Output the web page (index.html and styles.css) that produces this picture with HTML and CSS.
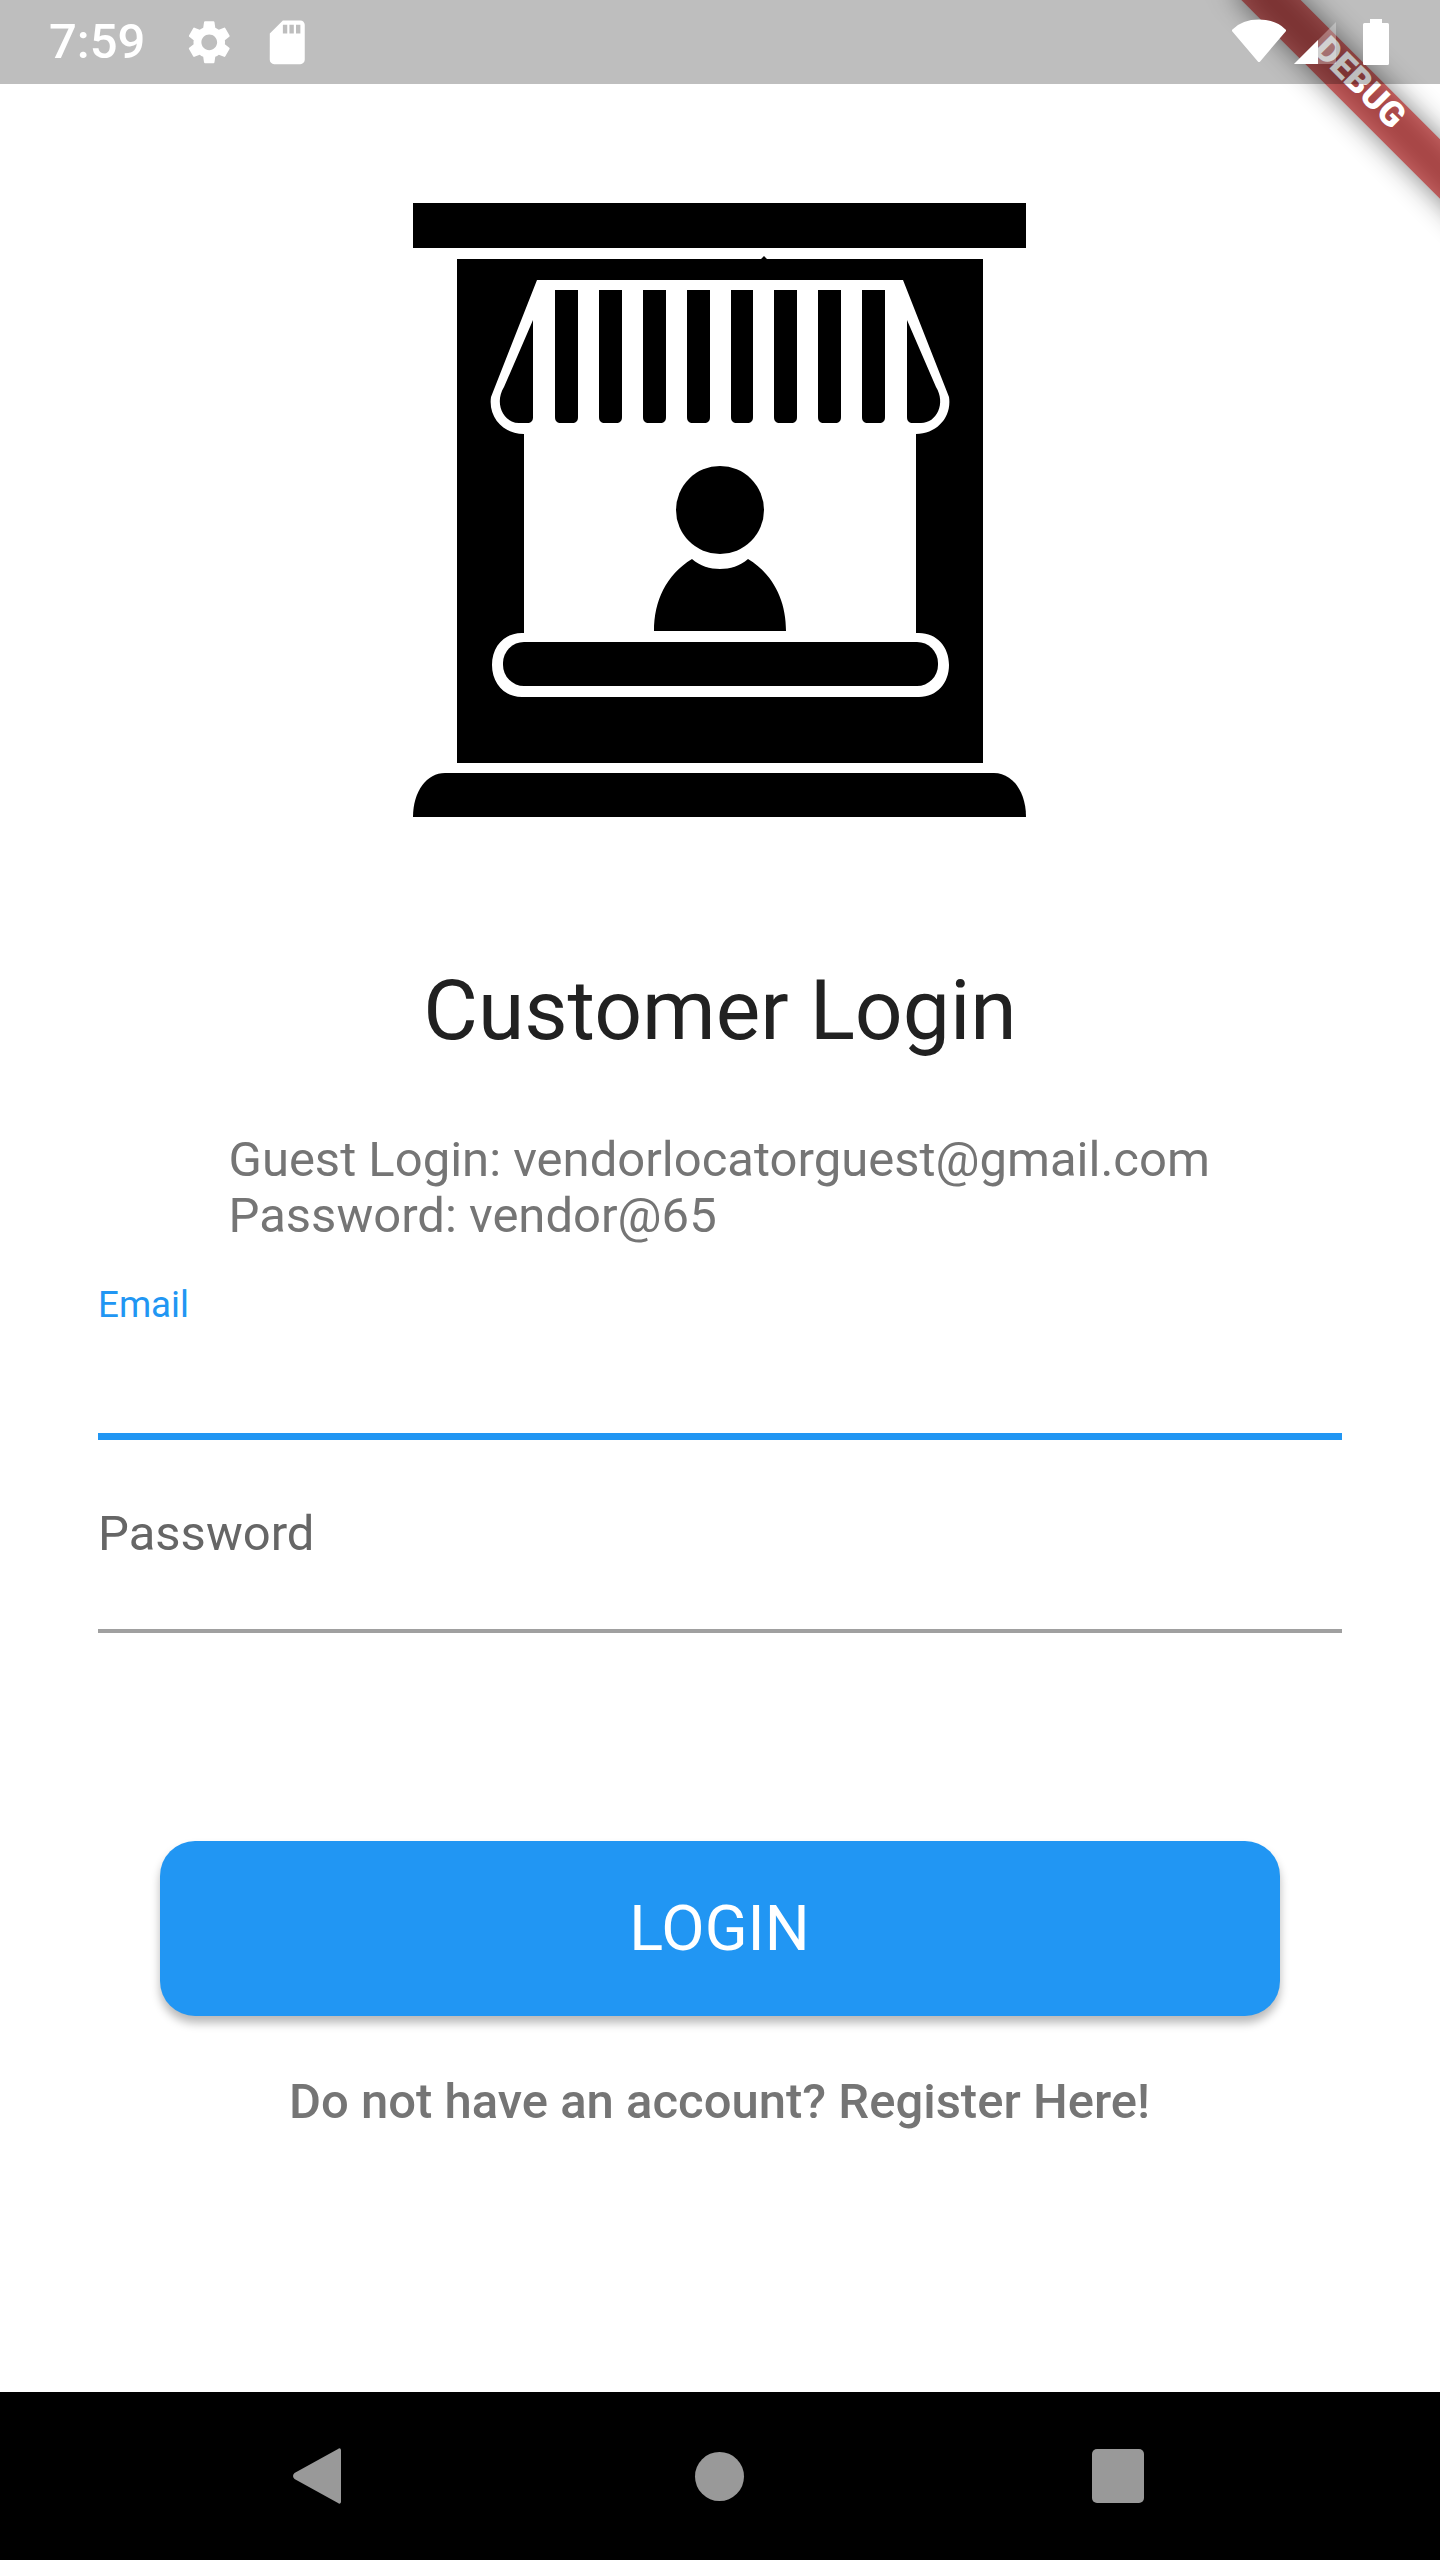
FILE: index.html
```html
<!DOCTYPE html>
<html lang="en">
<head>
<meta charset="utf-8">
<title>Customer Login</title>
<link rel="stylesheet" href="styles.css">
</head>
<body>
<div class="screen">
  <header class="statusbar">
    <span class="time">7:59</span>
    <svg class="icon-settings" viewBox="0 0 24 24"><path fill="#fff" d="M19.14 12.94c.04-.3.06-.61.06-.94 0-.32-.02-.64-.07-.94l2.03-1.58c.18-.14.23-.41.12-.61l-1.92-3.32c-.12-.22-.37-.29-.59-.22l-2.39.96c-.5-.38-1.03-.7-1.62-.94l-.36-2.54c-.04-.24-.24-.41-.48-.41h-3.84c-.24 0-.43.17-.47.41l-.36 2.54c-.59.24-1.13.57-1.62.94l-2.39-.96c-.22-.08-.47 0-.59.22L2.74 8.87c-.12.21-.08.47.12.61l2.03 1.58c-.05.3-.09.63-.09.94s.02.64.07.94l-2.03 1.58c-.18.14-.23.41-.12.61l1.92 3.32c.12.22.37.29.59.22l2.39-.96c.5.38 1.03.7 1.62.94l.36 2.54c.05.24.24.41.48.41h3.84c.24 0 .44-.17.47-.41l.36-2.54c.59-.24 1.13-.56 1.62-.94l2.39.96c.22.08.47 0 .59-.22l1.92-3.32c.12-.22.07-.47-.12-.61l-2.01-1.58zM12 15.6c-1.98 0-3.6-1.62-3.6-3.6s1.62-3.6 3.6-3.6 3.6 1.62 3.6 3.6-1.62 3.6-3.6 3.6z"/></svg>
    <svg class="icon-sd" viewBox="0 0 24 24"><path fill="#fff" d="M18 2h-8L4.02 8 4 20c0 1.1.9 2 2 2h12c1.1 0 2-.9 2-2V4c0-1.1-.9-2-2-2zm-6 6h-2V4h2v4zm3 0h-2V4h2v4zm3 0h-2V4h2v4z"/></svg>
    <div class="status-right">
      <svg class="icon-wifi" viewBox="0 0 54 44"><path fill="#fff" stroke="#fff" stroke-width="3" stroke-linejoin="round" d="M1.5 11.500C8 5 17 2 27 2s19 3 25.500 9.500L27 41.500z"/></svg>
      <svg class="icon-cell" viewBox="0 0 42 42"><path fill="#fff" opacity=".3" d="M0 42 42 0v42z"/><path fill="#fff" d="M0 42 24 18v24z"/></svg>
      <svg class="icon-battery" viewBox="0 0 26 46"><path fill="#fff" d="M7 0h12v4h5.500a1.500 1.500 0 0 1 1.500 1.500v39a1.500 1.500 0 0 1-1.500 1.500h-23A1.500 1.500 0 0 1 0 44.500v-39A1.500 1.500 0 0 1 1.500 4H7z"/></svg>
    </div>
  </header>

  <main class="content">
    <svg class="logo" viewBox="413 203 613 614">
      <rect x="413" y="203" width="613" height="45" fill="#000"/>
      <path fill="#000" d="M457 259h304l3-3 3 3h216v504H457z"/>
      <path fill="#fff" d="M537 280h366l46 117c3 20-12 37-33 37v199h3c18 0 30 14 30 32s-12 32-30 32H522c-18 0-30-14-30-32s12-32 30-32h2V434c-20 0-36-16-33-37z"/>
      <path fill="#000" d="M533 320V417c0 4-2 6-6 6h-8c-16 0-25-20-15-36z"/>
      <path fill="#000" d="M907 320V417c0 4 2 6 6 6h8c16 0 25-20 15-36z"/>
      <path fill="#000" d="M555 290h23v127c0 4-2 6-6 6h-11c-4 0-6-2-6-6zM599 290h23v127c0 4-2 6-6 6h-11c-4 0-6-2-6-6zM643 290h23v127c0 4-2 6-6 6h-11c-4 0-6-2-6-6zM687 290h23v127c0 4-2 6-6 6h-11c-4 0-6-2-6-6zM731 290h22v127c0 4-2 6-6 6h-10c-4 0-6-2-6-6zM774 290h23v127c0 4-2 6-6 6h-11c-4 0-6-2-6-6zM818 290h23v127c0 4-2 6-6 6h-11c-4 0-6-2-6-6zM862 290h23v127c0 4-2 6-6 6h-11c-4 0-6-2-6-6z"/>
      <ellipse cx="720" cy="510" rx="44" ry="44" fill="#000"/>
      <path fill="#000" d="M654 631c0-30 12-56 38-72 8 7 18 10 28 10s20-3 28-10c26 16 38 42 38 72z"/>
      <rect x="503" y="642" width="435" height="44" rx="21" fill="#000"/>
      <path fill="#000" d="M445 773h549c18 0 32 18 32 44H413c0-26 14-44 32-44z"/>
    </svg>

    <h1 class="title">Customer Login</h1>
    <p class="guest">Guest Login: vendorlocatorguest@gmail.com<br>Password: vendor@65</p>

    <div class="field field-email">
      <label class="float-label">Email</label>
    </div>
    <div class="field field-password">
      <label class="hint-label">Password</label>
    </div>

    <button class="login" type="button">LOGIN</button>
    <p class="register">Do not have an account? Register Here!</p>
  </main>

  <nav class="navbar">
    <svg class="nav-back" viewBox="0 0 48 56"><path fill="#999" d="M45 1c1.500-1.500 3-.5 3 1.500v51c0 2-1.500 3-3 1.500L1.500 31c-2-2-2-4 0-6z"/></svg>
    <span class="nav-home"></span>
    <span class="nav-recent"></span>
  </nav>

  <div class="banner-shadow"></div>
  <div class="banner">DEBUG</div>
</div>
</body>
</html>
```

FILE: styles.css
```css
* { box-sizing: border-box; }
html, body { margin: 0; padding: 0; background: #fff; }
body { font-family: Roboto, "Liberation Sans", sans-serif; }

.screen {
  position: relative;
  width: 1440px;
  height: 2560px;
  display: flex;
  flex-direction: column;
  overflow: hidden;
  background: #fff;
}

/* Status bar: a translucent scrim drawn over the app and its banner */
.statusbar {
  position: relative;
  z-index: 2;
  height: 84px;
  flex: none;
  background: rgba(0, 0, 0, .255);
  display: flex;
  align-items: center;
  padding-left: 49px;
  color: #fff;
}
.time { font-size: 49px; line-height: 84px; width: 95px; font-weight: 500; }
.icon-settings { width: 52.5px; height: 52.5px; margin-left: 39px; }
.icon-sd { width: 52.5px; height: 52.5px; margin-left: 25px; }
.status-right { margin-left: auto; display: flex; align-items: flex-start; padding-right: 51px; height: 84px; }
.icon-wifi { width: 54px; height: 44px; margin-top: 19px; }
.icon-cell { width: 42px; height: 42px; margin-left: 8px; margin-top: 22px; }
.icon-battery { width: 26px; height: 46px; margin-left: 27px; margin-top: 19px; }

/* Content */
.content { flex: 1; display: flex; flex-direction: column; align-items: center; }
.logo { display: block; width: 613px; height: 614px; margin: 119px 1px 0 0; flex: none; filter: blur(.6px); }
.title {
  margin: 145px 0 0;
  font-size: 84px;
  font-weight: 400;
  line-height: 98px;
  color: #212121;
}
.guest {
  align-self: flex-start;
  margin: 71.5px 0 0 228.5px;
  font-size: 49px;
  line-height: 56px;
  color: #757575;
}
.field { align-self: stretch; margin: 0 98px; }
.field-email {
  height: 157px;
  margin-top: 39.5px;
  border-bottom: 7px solid #2196f3;
}
.float-label { display: block; font-size: 36.750px; line-height: 43px; color: #2196f3; }
.field-password {
  height: 193px;
  border-bottom: 4px solid #a0a0a0;
  padding-top: 65px;
}
.hint-label { display: block; font-size: 49px; line-height: 57px; color: #666; }

.login {
  width: 1120px;
  height: 175px;
  margin-top: 208px;
  flex: none;
  border: 0;
  padding: 0 1px 0 0;
  border-radius: 35px;
  background: #2196f3;
  color: #fff;
  font-family: inherit;
  font-size: 63px;
  font-weight: 400;
  box-shadow: 0 7px 10px rgba(0, 0, 0, .28);
}
.register {
  margin: 57px 1px 0 0;
  font-size: 49px;
  font-weight: 500;
  line-height: 57px;
  color: #757575;
}

/* Navigation bar */
.navbar {
  height: 168px;
  flex: none;
  background: #000;
  display: flex;
  align-items: center;
  padding-left: 293px;
}
.nav-back { width: 48px; height: 56px; }
.nav-home { width: 49px; height: 49px; margin-left: 354px; border-radius: 50%; background: #999; }
.nav-recent { width: 52px; height: 54px; margin-left: 348px; border-radius: 5px; background: #999; }

/* Debug banner */
.banner-shadow, .banner {
  position: absolute;
  z-index: 1;
  top: 80px;
  left: 1197px;
  width: 350px;
  height: 42px;
  transform: rotate(45deg);
}
.banner-shadow { background: rgba(0, 0, 0, .5); filter: blur(14px); }
.banner {
  padding-right: 43px;
  background: rgba(183, 28, 28, .627);
  color: #fff;
  font-size: 35px;
  font-weight: 900;
  line-height: 34px;
  text-align: center;
}
```
